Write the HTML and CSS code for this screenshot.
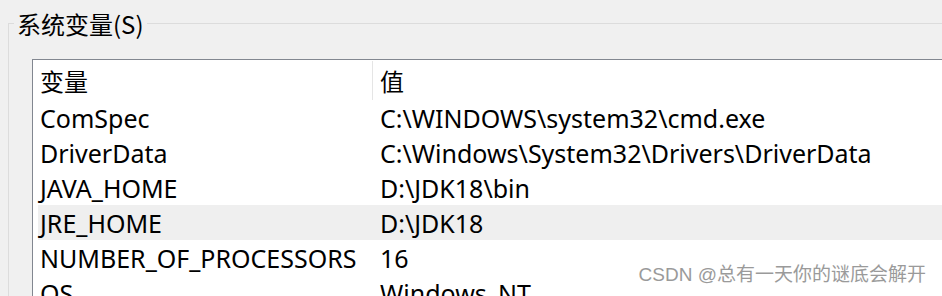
FILE: index.html
```html
<!DOCTYPE html>
<html lang="zh-CN">
<head>
<meta charset="utf-8">
<title>系统变量</title>
<link rel="stylesheet" href="styles.css">
</head>
<body>
<div class="page">
  <div class="group">
    <div class="group-title">
      <span class="corner"></span>
      <span class="title">系统变量(S)</span>
      <span class="rule"></span>
    </div>
    <div class="group-body">
      <div class="list">
        <div class="row head">
          <div class="cell name">变量</div>
          <div class="cell value sep">值</div>
        </div>
        <div class="row">
          <div class="cell name">ComSpec</div>
          <div class="cell value">C:\WINDOWS\system32\cmd.exe</div>
        </div>
        <div class="row">
          <div class="cell name">DriverData</div>
          <div class="cell value">C:\Windows\System32\Drivers\DriverData</div>
        </div>
        <div class="row">
          <div class="cell name">JAVA_HOME</div>
          <div class="cell value">D:\JDK18\bin</div>
        </div>
        <div class="row selected">
          <div class="cell name">JRE_HOME</div>
          <div class="cell value">D:\JDK18</div>
        </div>
        <div class="row">
          <div class="cell name">NUMBER_OF_PROCESSORS</div>
          <div class="cell value">16</div>
        </div>
        <div class="row">
          <div class="cell name">OS</div>
          <div class="cell value">Windows_NT</div>
        </div>
      </div>
    </div>
  </div>
  <div class="watermark">CSDN @总有一天你的谜底会解开</div>
</div>
</body>
</html>
```

FILE: styles.css
```css
html, body {
  margin: 0;
  padding: 0;
}
body {
  width: 942px;
  height: 296px;
  overflow: hidden;
  background: #f0f0f0;
  font-family: "Noto Sans", "Noto Sans CJK SC", sans-serif;
  color: #000;
}
.page {
  position: relative;
  width: 942px;
  height: 296px;
  overflow: hidden;
}
.group {
  margin-left: 8px;
  padding-top: 10px;
}
.group-title {
  display: flex;
  align-items: center;
  height: 26px;
}
.corner {
  align-self: flex-end;
  width: 5px;
  height: 12px;
  border-top: 1px solid #dcdcdc;
  border-left: 1px solid #dcdcdc;
}
.title {
  margin-left: 3px;
  margin-top: 2px;
  font-size: 24px;
  line-height: 26px;
  white-space: nowrap;
  font-family: "Noto Sans CJK SC", "Noto Sans", sans-serif;
}
.rule {
  flex: 1;
  height: 1px;
  margin-left: 3px;
  background: #dcdcdc;
}
.group-body {
  border-left: 1px solid #dcdcdc;
  padding: 23px 0 0 23px;
  height: 300px;
}
.list {
  background: #fff;
  border-top: 1px solid #828790;
  border-left: 1px solid #828790;
  padding-left: 5px;
  height: 300px;
}
.row {
  display: grid;
  grid-template-columns: 334px 1fr;
  height: 35px;
  align-items: center;
  font-size: 25px;
  white-space: nowrap;
}
.row.head {
  height: 40px;
  align-items: stretch;
}
.row.head .cell {
  display: flex;
  align-items: center;
  font-size: 24px;
  font-family: "Noto Sans CJK SC", sans-serif;
}
.row.head .sep {
  border-left: 1px solid #e5e5e5;
  margin-top: 1px;
  padding-left: 7px;
}
.row.selected {
  background: #efefef;
}
.cell.name {
  padding-left: 2px;
}
.cell.value {
  padding-left: 8px;
}
.watermark {
  position: absolute;
  right: 16px;
  bottom: 10px;
  font-size: 19px;
  color: #9a9a9a;
  text-shadow: 0 0 1px #fff;
  font-family: "Liberation Sans", "Noto Sans CJK SC", sans-serif;
  white-space: nowrap;
}
```
